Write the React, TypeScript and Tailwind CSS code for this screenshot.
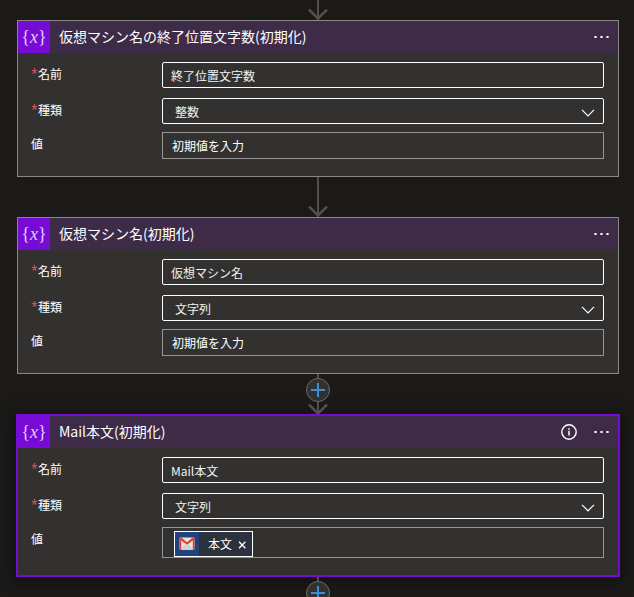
import React from "react";

type Action = {
  id: string;
  title: string;
  name: string;
  type: string;
  token?: string;
  selected?: boolean;
};

const types = ["整数", "文字列", "ブール値", "配列"];

const actions: Action[] = [
  {
    id: "end-position",
    title: "仮想マシン名の終了位置文字数(初期化)",
    name: "終了位置文字数",
    type: "整数",
  },
  {
    id: "vm-name",
    title: "仮想マシン名(初期化)",
    name: "仮想マシン名",
    type: "文字列",
  },
  {
    id: "mail-body",
    title: "Mail本文(初期化)",
    name: "Mail本文",
    type: "文字列",
    token: "本文",
    selected: true,
  },
];

const Arrow = () => (
  <svg width="22" height="11" viewBox="0 0 22 11" className="-mt-[11px] shrink-0" fill="none">
    <path d="M2 0.5L11 9.5L20 0.5" stroke="#52504f" strokeWidth="2.5" />
  </svg>
);

const AddButton = () => (
  <button
    type="button"
    aria-label="新しいステップの挿入"
    className="flex size-6 shrink-0 items-center justify-center rounded-full border border-[#6b6967] bg-[#323130]"
  >
    <svg width="14" height="14" viewBox="0 0 14 14">
      <path d="M7 0V14M0 7H14" stroke="#3a8fd8" strokeWidth="2" />
    </svg>
  </button>
);

const Line = ({ className }: { className: string }) => (
  <div className={`w-0.5 shrink-0 bg-[#52504f] ${className}`} />
);

const MoreIcon = () => (
  <svg width="16" height="16" viewBox="0 0 16 16" fill="#fff">
    <path d="M0.4 7h2.2v2H0.4zM6.4 7h2.2v2H6.4zM12.4 7h2.2v2h-2.2z" />
  </svg>
);

const InfoIcon = () => (
  <svg width="16" height="16" viewBox="0 0 16 16" fill="none">
    <circle cx="8" cy="8" r="7.2" stroke="#fff" strokeWidth="1.4" />
    <path d="M8 6.8V11.5M8 4.2V5.7" stroke="#fff" strokeWidth="1.5" />
  </svg>
);

const GmailIcon = () => (
  <svg width="16" height="14" viewBox="0 0 16 14">
    <rect x="0.5" y="0.5" width="15" height="12.5" rx="1" fill="#e7e4e2" />
    <path d="M1 13L6 7.5L8 9L10 7.5L15 13Z" fill="#d3d0ce" />
    <path
      d="M0.5 1.5Q0.5 0.5 1.5 0.5H2.3L8 5.2L13.7 0.5H14.5Q15.5 0.5 15.5 1.5V12Q15.5 13 14.5 13H13.8V3.5L8 7.8L2.2 3.5V13H1.5Q0.5 13 0.5 12Z"
      fill="#d9443a"
    />
  </svg>
);

const Label = ({
  htmlFor,
  required,
  children,
}: {
  htmlFor: string;
  required?: boolean;
  children: React.ReactNode;
}) => (
  <label htmlFor={htmlFor} className="flex w-[131px] shrink-0 leading-6">
    {required && (
      <span className="w-[7px] font-['Open_Sans',sans-serif] text-[#e8585c]">*</span>
    )}
    {children}
  </label>
);

const ActionCard = ({ action }: { action: Action }) => {
  const { id, title, name, type, token, selected } = action;

  return (
    <section
      className={`border bg-[#323130] ${
        selected
          ? "border-[#770bd6] shadow-[0_2px_14px_4px_rgba(0,0,0,0.35)] outline outline-[#770bd6]"
          : "border-[#8a8886]"
      }`}
    >
      <header className="flex h-8 items-center bg-[#3e2b48] pr-2">
        <div className="flex size-8 shrink-0 items-center justify-center bg-[#770bd6] font-['Liberation_Serif',serif] text-lg leading-8 text-[#e4cdf8]">
          {"{"}
          <i>x</i>
          {"}"}
        </div>
        <h2 className="h-8 min-w-0 flex-1 truncate pl-[9px] text-sm leading-[30px]">{title}</h2>
        <div className="flex items-center gap-[17px]">
          {selected && (
            <button type="button" aria-label="情報">
              <InfoIcon />
            </button>
          )}
          <button type="button" aria-label="メニュー">
            <MoreIcon />
          </button>
        </div>
      </header>

      <div className="pt-[9px] pr-[14px] pb-[17px] pl-[13px] text-xs">
        <div className="mb-2.5 flex">
          <Label htmlFor={`${id}-name`} required>
            名前
          </Label>
          <input
            id={`${id}-name`}
            defaultValue={name}
            className="h-[26px] min-w-0 flex-1 rounded-xs border border-white px-2 text-[#f3f2f1]"
          />
        </div>

        <div className="mb-2 flex">
          <Label htmlFor={`${id}-type`} required>
            種類
          </Label>
          <div className="relative min-w-0 flex-1">
            <select
              id={`${id}-type`}
              defaultValue={type}
              className="block h-[26px] w-full appearance-none rounded-xs border border-white bg-[#323130] px-3 pt-0.5 text-[#f3f2f1]"
            >
              {types.map((item) => (
                <option key={item}>{item}</option>
              ))}
            </select>
            <svg
              width="14"
              height="8"
              viewBox="0 0 14 8"
              fill="none"
              className="pointer-events-none absolute top-[11px] right-[9px]"
            >
              <path d="M1 0.8L7 6.8L13 0.8" stroke="#fff" strokeWidth="1.2" />
            </svg>
          </div>
        </div>

        <div className="flex">
          <Label htmlFor={`${id}-value`}>値</Label>
          {token ? (
            <div className="flex h-[31px] min-w-0 flex-1 items-end border border-[#979593] pl-[11px]">
              <span className="flex h-[26px] items-center border border-white bg-[#2b323e]">
                <span className="flex size-6 items-center justify-center bg-[#20427f]">
                  <GmailIcon />
                </span>
                <span className="pl-[9px] leading-6">{token}</span>
                <button type="button" aria-label="削除" className="px-[6px]">
                  <svg width="8" height="8" viewBox="0 0 8 8" className="mt-0.5">
                    <path d="M1 0.8L7.4 7.2M7.4 0.8L1 7.2" stroke="#fff" strokeWidth="1.3" />
                  </svg>
                </button>
              </span>
              <input id={`${id}-value`} className="h-full min-w-0 flex-1 px-1 outline-none" />
            </div>
          ) : (
            <input
              id={`${id}-value`}
              placeholder="初期値を入力"
              className="h-[27px] min-w-0 flex-1 border border-[#979593] px-[9px] placeholder:text-white"
            />
          )}
        </div>
      </div>
    </section>
  );
};

const App = () => {
  return (
    <main
      lang="ja"
      className="h-screen overflow-hidden bg-[#1b1a19] pr-[15px] pl-[17px] font-['Noto_Sans_CJK_JP',sans-serif] text-white"
    >
      <div className="flex flex-col items-center">
        <Line className="h-5" />
        <Arrow />
      </div>
      <ActionCard action={actions[0]} />
      <div className="flex flex-col items-center">
        <Line className="h-10" />
        <Arrow />
      </div>
      <ActionCard action={actions[1]} />
      <div className="flex flex-col items-center">
        <Line className="h-1" />
        <AddButton />
        <Line className="h-[13px]" />
        <Arrow />
      </div>
      <ActionCard action={actions[2]} />
      <div className="flex flex-col items-center">
        <Line className="h-[5px]" />
        <AddButton />
      </div>
    </main>
  );
};

export default App;
